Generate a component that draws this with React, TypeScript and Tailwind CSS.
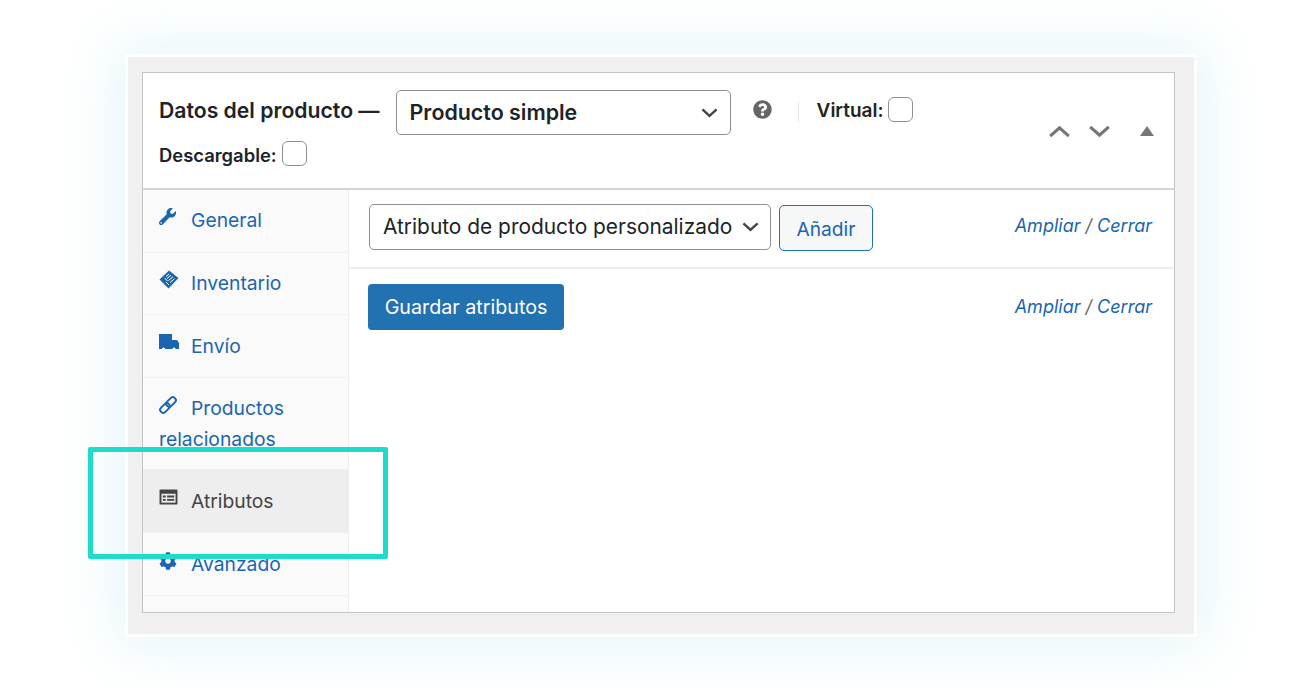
import { ReactNode } from "react";
import { FaWrench, FaCog, FaQuestionCircle } from "react-icons/fa";

const Chevron = ({ up = false, className = "" }: { up?: boolean; className?: string }) => (
  <svg viewBox="0 0 24 14" className={className} fill="none" stroke="currentColor" strokeWidth="3.4">
    <path d={up ? "M2 12 12 3l10 9" : "M2 2l10 9 10-9"} />
  </svg>
);

const TagIcon = () => (
  <svg viewBox="0 0 20 20" className="h-[20px] w-[20px]">
    <path d="M10 0.5 19.5 8 9.5 18.5 0.5 9.5z" fill="#1a65b0" />
    <path d="M7 6.5 10 4M8 8.5 12 5.2M9.5 10.5 14 6.8M11 12.5 15.5 8.8M5.8 8 8.5 11M7 12l3 3" stroke="#fff" strokeWidth="1" fill="none" />
  </svg>
);

const TruckIcon = () => (
  <svg viewBox="0 0 20 17" className="h-[17px] w-[20px]" fill="#1a65b0">
    <path d="M0 0h13v6h5l2 3v6H0z" />
    <circle cx="4.5" cy="15" r="1.6" fill="#fff" />
    <circle cx="15" cy="15" r="1.6" fill="#fff" />
  </svg>
);

const ChainIcon = () => (
  <svg viewBox="0 0 18 18" className="h-[18px] w-[18px]" fill="none" stroke="#1a65b0" strokeWidth="2">
    <rect x="9" y="0.5" width="6" height="11" rx="3" transform="rotate(45 12 6)" />
    <rect x="3" y="6.5" width="6" height="11" rx="3" transform="rotate(45 6 12)" />
  </svg>
);

const FormIcon = () => (
  <svg viewBox="0 0 20 18" className="h-[17px] w-[19px]">
    <rect x="0.5" y="0.5" width="19" height="16" rx="1" fill="#444" />
    <rect x="2.5" y="5" width="15" height="9.5" fill="#e8e8e8" />
    <path d="M4 7h3v2H4zM4 10.5h3v2H4zM8.5 7H16v2H8.5zM8.5 10.5H16v2H8.5z" fill="#444" />
  </svg>
);

const Tab = ({
  icon,
  children,
  active = false,
  className = "",
}: {
  icon: ReactNode;
  children: ReactNode;
  active?: boolean;
  className?: string;
}) => (
  <div
    className={`border-b border-[#f1f1f1] pl-[16px] pr-2 text-[19.3px] leading-[31px] ${
      active ? "bg-[#eeeeee] text-[#444444]" : "text-[#1a65b0]"
    } ${className}`}
  >
    <span className="mr-[12px] inline-flex h-[20px] w-[20px] -translate-y-[5px] items-center align-middle">{icon}</span>
    {children}
  </div>
);

const ExpandClose = ({ className = "" }: { className?: string }) => (
  <div className={`text-[18px] italic text-[#1a65b0] ${className}`}>
    Ampliar <span className="text-[#666]">/</span> Cerrar
  </div>
);

const Checkbox = () => <span className="inline-block h-[25px] w-[25px] rounded-[6px] border border-[#8c8f94] bg-white" />;

export default function App() {
  return (
    <div className="relative h-[688px] w-full overflow-hidden bg-white pl-[125px] pr-[103px] pt-[54px] font-['Inter','Liberation_Sans',sans-serif] text-[#1d2327]">
      <div className="h-[583px] w-[1072px] border-[3px] border-white bg-[#f0f0f1] pb-[15px] pl-[14px] pr-[19px] pt-[15px] shadow-[0_0_50px_10px_rgba(190,232,240,0.38)]">
        <div className="flex h-[541px] flex-col border border-[#c3c4c7] bg-white">
          {/* header */}
          <div className="relative h-[117px] shrink-0 border-b-2 border-[#d4d5d7] pl-[16px] pt-[17px]">
            <div className="flex items-start">
              <span className="mt-[7px] text-[21.2px] font-semibold leading-[26px]">Datos del producto —</span>
              <div className="ml-[16px] flex h-[45px] w-[335px] items-center justify-between rounded-[5px] border border-[#8c8f94] pl-[13px] pr-[12px] text-[21.4px] font-semibold">
                Producto simple
                <Chevron className="h-[10px] w-[17px] text-[#444]" />
              </div>
              <FaQuestionCircle className="ml-[22px] mt-[10px] h-[19px] w-[19px] text-[#666]" />
              <span className="ml-[26px] mt-[12px] h-[20px] w-px bg-[#e6e6e6]" />
              <span className="ml-[18px] mt-[8px] text-[19px] font-semibold leading-[26px]">Virtual:</span>
              <span className="ml-[4px] mt-[7px]">
                <Checkbox />
              </span>
            </div>
            <div className="mt-[6px] flex items-start">
              <span className="mt-[1px] text-[18.4px] font-semibold leading-[26px]">Descargable:</span>
              <span className="ml-[5px] flex">
                <Checkbox />
              </span>
            </div>
            <div className="absolute right-[20px] top-[52px] flex items-center text-[#72777c]">
              <Chevron up className="h-[13px] w-[23px]" />
              <Chevron className="ml-[17px] h-[13px] w-[23px]" />
              <svg viewBox="0 0 14 10" className="ml-[29px] -translate-y-[1px] h-[10px] w-[14px]" fill="currentColor">
                <path d="M7 0l7 10H0z" />
              </svg>
            </div>
          </div>

          {/* body */}
          <div className="flex min-h-0 flex-1">
            <div className="w-[206px] shrink-0 border-r border-[#eeeeee] bg-[#fafafa]">
              <Tab className="h-[63px] pt-[15px]" icon={<FaWrench className="h-[17px] w-[17px] text-[#1a65b0]" />}>
                General
              </Tab>
              <Tab className="h-[62px] pt-[15px]" icon={<TagIcon />}>
                Inventario
              </Tab>
              <Tab className="h-[63px] pt-[16px]" icon={<TruckIcon />}>
                Envío
              </Tab>
              <Tab className="h-[92px] pt-[15px]" icon={<ChainIcon />}>
                Productos relacionados
              </Tab>
              <Tab active className="h-[63px] pt-[16px]" icon={<FormIcon />}>
                Atributos
              </Tab>
              <Tab className="h-[63px] pt-[16px]" icon={<FaCog className="h-[18px] w-[18px] text-[#1a65b0]" />}>
                Avanzado
              </Tab>
            </div>

            <div className="min-w-0 flex-1">
              <div className="flex h-[79px] items-start justify-between border-b-2 border-[#eeeeee] pl-[20px] pr-[22px] pt-[14px]">
                <div className="flex">
                  <div className="flex h-[46px] w-[402px] items-center justify-between rounded-[5px] border border-[#8c8f94] pl-[13px] pr-[11px] text-[20.9px]">
                    Atributo de producto personalizado
                    <Chevron className="h-[10px] w-[17px] text-[#444]" />
                  </div>
                  <div className="ml-[8px] mt-[1px] flex h-[46px] w-[94px] items-center justify-center rounded-[5px] border border-[#2271b1] bg-[#f6f7f7] pt-[2px] text-[19.2px] text-[#1a65b0]">
                    Añadir
                  </div>
                </div>
                <ExpandClose className="mt-[8px]" />
              </div>
              <div className="flex items-start justify-between pl-[19px] pr-[22px] pt-[15px]">
                <div className="flex h-[46px] w-[196px] items-center justify-center rounded-[4px] bg-[#2271b1] pt-[2px] text-[19.7px] text-white">
                  Guardar atributos
                </div>
                <ExpandClose className="mt-[9px]" />
              </div>
            </div>
          </div>
        </div>
      </div>
      {/* highlight over the Atributos tab */}
      <div className="absolute left-[88px] top-[447px] h-[112px] w-[300px] rounded-[2px] border-[5px] border-[#1edccb]" />
    </div>
  );
}
